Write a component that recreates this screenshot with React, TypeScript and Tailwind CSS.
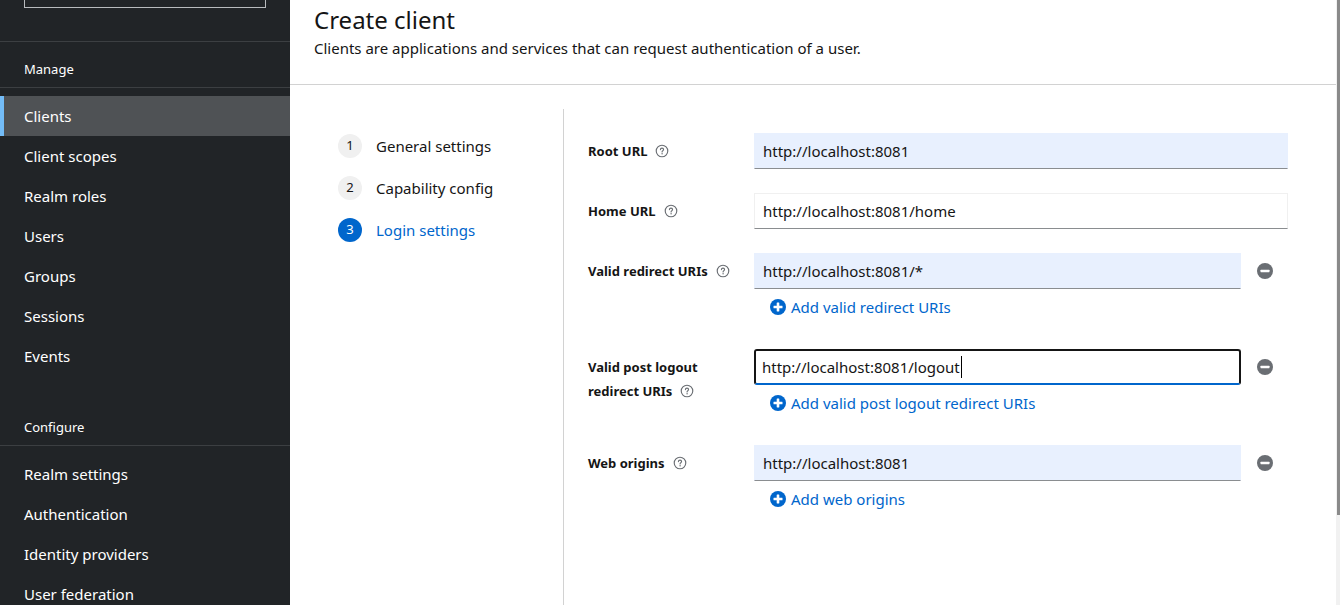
import { ReactNode } from "react";

const manageItems = ["Clients", "Client scopes", "Realm roles", "Users", "Groups", "Sessions", "Events"];
const configureItems = ["Realm settings", "Authentication", "Identity providers", "User federation"];

const steps = [
  { n: 1, label: "General settings" },
  { n: 2, label: "Capability config" },
  { n: 3, label: "Login settings", active: true },
];

const HelpIcon = () => (
  <svg viewBox="0 0 16 16" className="h-[14px] w-[14px] shrink-0 text-[#6a6e73]" fill="none">
    <circle cx="8" cy="8" r="6.6" stroke="currentColor" strokeWidth="1.3" />
    <path
      d="M6.2 6.4c0-1 .8-1.7 1.8-1.7s1.8.7 1.8 1.6c0 .7-.4 1-.9 1.4-.5.3-.8.6-.8 1.2v.3"
      stroke="currentColor"
      strokeWidth="1.3"
      strokeLinecap="round"
    />
    <circle cx="8.1" cy="11.2" r="0.8" fill="currentColor" />
  </svg>
);

const PlusCircle = () => (
  <svg viewBox="0 0 16 16" className="h-4 w-4 shrink-0">
    <circle cx="8" cy="8" r="8" fill="#0066cc" />
    <rect x="3.5" y="6.7" width="9" height="2.6" rx="0.4" fill="white" />
    <rect x="6.7" y="3.5" width="2.6" height="9" rx="0.4" fill="white" />
  </svg>
);

const MinusCircle = () => (
  <svg viewBox="0 0 16 16" className="h-4 w-4">
    <circle cx="8" cy="8" r="8" fill="#6a6e73" />
    <rect x="3.5" y="6.8" width="9" height="2.4" rx="0.4" fill="white" />
  </svg>
);

const Label = ({ children }: { children: ReactNode }) => (
  <div className="pt-[6px] text-[13px] font-bold leading-6 text-[#151515]">{children}</div>
);

const Input = ({ value, autofill = true }: { value: string; autofill?: boolean }) => (
  <div
    className={`flex h-9 items-center border px-2 text-[15px] text-[#151515] ${
      autofill ? "border-[#e8f0fe] border-b-[#8a8d90] bg-[#e8f0fe]" : "border-[#f0f0f0] border-b-[#8a8d90] bg-white"
    }`}
  >
    {value}
  </div>
);

const AddLink = ({ text }: { text: string }) => (
  <div className="flex h-9 items-center gap-[5px] pl-4 text-[15px] text-[#0066cc]">
    <PlusCircle />
    <span>{text}</span>
  </div>
);

const RemoveButton = () => (
  <div className="flex h-9 w-[47px] shrink-0 items-center justify-center">
    <MinusCircle />
  </div>
);

const NavItem = ({ label, active }: { label: string; active?: boolean }) => (
  <div
    className={`flex h-10 items-center border-l-4 pl-5 text-[15px] text-white ${
      active ? "border-[#73bcf7] bg-[#4f5255]" : "border-transparent"
    }`}
  >
    {label}
  </div>
);

export default function App() {
  return (
    <div className="flex h-[605px] w-[1340px] overflow-hidden bg-white font-['Noto_Sans','Open_Sans',sans-serif]">
      {/* sidebar */}
      <aside className="flex w-[290px] shrink-0 flex-col bg-[#212427] [&>*]:shrink-0">
        <div className="h-[41px] px-6">
          <div className="mt-[-28px] h-9 border border-[#b8bbbe]" />
        </div>
        <div className="border-t border-[#3c3f42] px-6 pt-4 pb-[7px] text-[13px] leading-[22px] text-white">Manage</div>
        <nav className="border-t border-[#3c3f42] pt-2 pb-6">
          {manageItems.map((item) => (
            <NavItem key={item} label={item} active={item === "Clients"} />
          ))}
        </nav>
        <div className="px-6 pt-4 pb-[7px] text-[13px] leading-[22px] text-white">Configure</div>
        <nav className="border-t border-[#3c3f42] pt-2">
          {configureItems.map((item) => (
            <NavItem key={item} label={item} />
          ))}
        </nav>
      </aside>

      {/* main */}
      <main className="flex min-w-0 flex-1 flex-col text-[#151515]">
        <header className="border-b border-[#d2d2d2] pt-1 pb-6 pl-6">
          <h1 className="text-[24px] leading-8">Create client</h1>
          <p className="text-[15px] leading-6">Clients are applications and services that can request authentication of a user.</p>
        </header>

        <div className="flex flex-1 pt-6">
          <ol className="w-[274px] shrink-0 border-r border-[#d2d2d2] pt-4 pl-12">
            {steps.map((s) => (
              <li key={s.n} className="flex h-[42px] items-center gap-[14px]">
                <span
                  className={`flex h-6 w-6 items-center justify-center rounded-full text-[13px] ${
                    s.active ? "bg-[#0066cc] text-white" : "bg-[#f0f0f0] text-[#151515]"
                  }`}
                >
                  {s.n}
                </span>
                <span className={`text-[15px] ${s.active ? "text-[#0066cc]" : "text-[#151515]"}`}>{s.label}</span>
              </li>
            ))}
          </ol>

          <div className="flex-1 pt-6 pr-12 pl-6">
            <div className="grid grid-cols-[166px_1fr] gap-y-6">
              <Label>
                <span className="flex items-center gap-2">Root URL <HelpIcon /></span>
              </Label>
              <Input value="http://localhost:8081" />

              <Label>
                <span className="flex items-center gap-2">Home URL <HelpIcon /></span>
              </Label>
              <Input value="http://localhost:8081/home" autofill={false} />

              <Label>
                <span className="flex items-center gap-2">Valid redirect URIs <HelpIcon /></span>
              </Label>
              <div>
                <div className="flex">
                  <div className="flex-1">
                    <Input value="http://localhost:8081/*" />
                  </div>
                  <RemoveButton />
                </div>
                <AddLink text="Add valid redirect URIs" />
              </div>

              <Label>
                <div>Valid post logout</div>
                <span className="flex items-center gap-2">redirect URIs <HelpIcon /></span>
              </Label>
              <div>
                <div className="flex">
                  <div className="flex h-9 flex-1 items-center rounded-[3px] border-2 border-[#151515] border-b-[#0066cc] px-[6px] text-[15px]">
                    http://localhost:8081/logout
                    <span className="ml-px inline-block h-[22px] w-px bg-black" />
                  </div>
                  <RemoveButton />
                </div>
                <AddLink text="Add valid post logout redirect URIs" />
              </div>

              <Label>
                <span className="flex items-center gap-2">Web origins <HelpIcon /></span>
              </Label>
              <div>
                <div className="flex">
                  <div className="flex-1">
                    <Input value="http://localhost:8081" />
                  </div>
                  <RemoveButton />
                </div>
                <AddLink text="Add web origins" />
              </div>
            </div>
          </div>
        </div>
      </main>

      {/* scrollbar */}
      <div className="w-1 shrink-0 bg-[#f1f1f1]">
        <div className="ml-auto h-[515px] w-[3px] bg-[#8a8a8a]" />
      </div>
    </div>
  );
}
